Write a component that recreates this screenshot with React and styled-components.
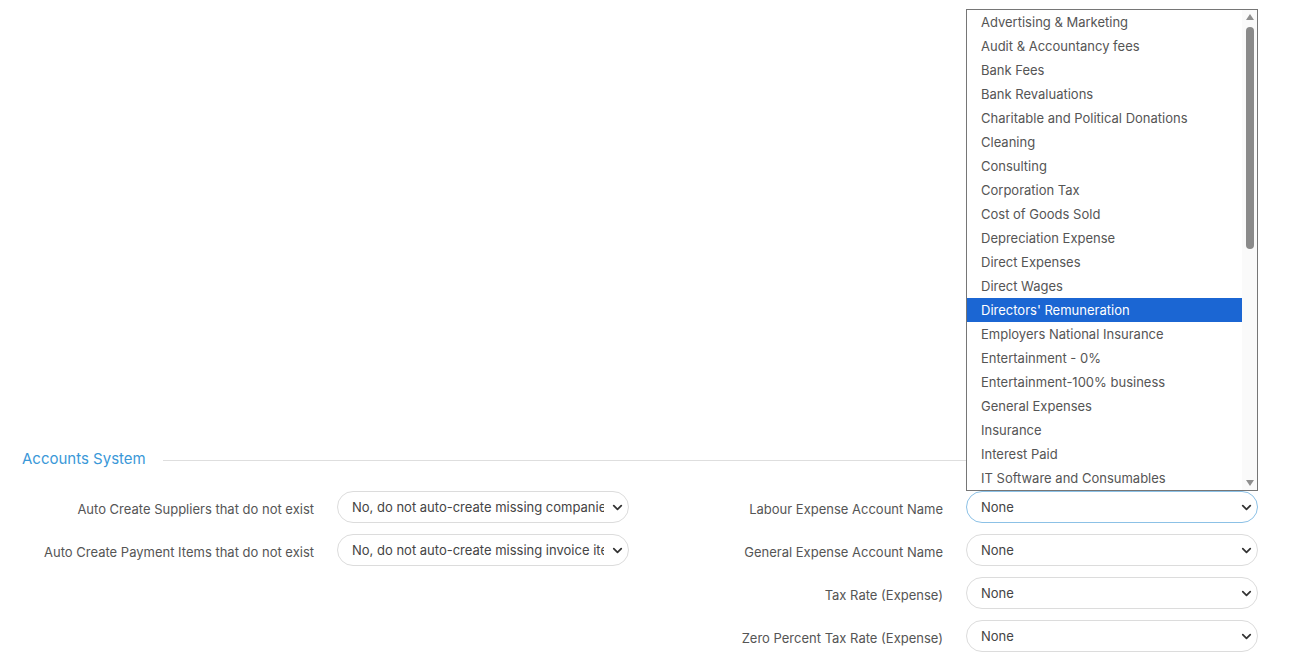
import React from "react";
import styled, { createGlobalStyle } from "styled-components";
import { ChevronDown } from "lucide-react";

const expenseAccounts = [
  "Advertising & Marketing",
  "Audit & Accountancy fees",
  "Bank Fees",
  "Bank Revaluations",
  "Charitable and Political Donations",
  "Cleaning",
  "Consulting",
  "Corporation Tax",
  "Cost of Goods Sold",
  "Depreciation Expense",
  "Direct Expenses",
  "Direct Wages",
  "Directors' Remuneration",
  "Employers National Insurance",
  "Entertainment - 0%",
  "Entertainment-100% business",
  "General Expenses",
  "Insurance",
  "Interest Paid",
  "IT Software and Consumables",
];

const Dropdown = ({ items, selected }) => (
  <StList>
    <StOptions>
      {items.map((item) => (
        <StOption key={item} active={item === selected}>
          {item}
        </StOption>
      ))}
    </StOptions>
    <StScrollbar>
      <StArrow up />
      <StTrack>
        <StThumb />
      </StTrack>
      <StArrow />
    </StScrollbar>
  </StList>
);

const Field = ({ label, value, focused, children }) => (
  <StField>
    <StLabel>{label}</StLabel>
    <StSelectWrap>
      <StSelect focused={focused}>
        <StValue>{value}</StValue>
        <ChevronDown size={15} strokeWidth={2.8} color="#333" />
      </StSelect>
      {children}
    </StSelectWrap>
  </StField>
);

const App = () => {
  return (
    <>
      <GlobalStyle />
      <StPage>
        <StSection>
          <StHeader>
            <StTitle>Accounts System</StTitle>
            <StRule />
          </StHeader>
          <StColumns>
            <StColumn>
              <Field
                label="Auto Create Suppliers that do not exist"
                value="No, do not auto-create missing companies"
              />
              <Field
                label="Auto Create Payment Items that do not exist"
                value="No, do not auto-create missing invoice items"
              />
            </StColumn>
            <StColumn>
              <Field label="Labour Expense Account Name" value="None" focused>
                <Dropdown
                  items={expenseAccounts}
                  selected="Directors' Remuneration"
                />
              </Field>
              <Field label="General Expense Account Name" value="None" />
              <Field label="Tax Rate (Expense)" value="None" />
              <Field label="Zero Percent Tax Rate (Expense)" value="None" />
            </StColumn>
          </StColumns>
        </StSection>
      </StPage>
    </>
  );
};

export default App;

const GlobalStyle = createGlobalStyle`
  body {
    margin: 0;
    background: #ffffff;
    font-family: Inter, "Liberation Sans", sans-serif;
  }
`;

const StPage = styled.div`
  width: 1290px;
  height: 670px;
  overflow: hidden;
  padding-top: 448px;
  box-sizing: border-box;
`;

const StSection = styled.div`
  display: flex;
  flex-direction: column;
`;

const StHeader = styled.div`
  display: flex;
  align-items: center;
  gap: 17px;
  padding: 0 40px 0 22px;
  height: 20px;
`;

const StTitle = styled.div`
  font-size: 15px;
  color: #3a98d8;
  white-space: nowrap;
`;

const StRule = styled.div`
  flex: 1;
  height: 1px;
  background: #dedede;
  margin-top: 4px;
`;

const StColumns = styled.div`
  display: grid;
  grid-template-columns: 650px 1fr;
  margin-top: 23px;
`;

const StColumn = styled.div`
  display: flex;
  flex-direction: column;
  gap: 11px;
`;

const StField = styled.div`
  display: flex;
  align-items: center;
  gap: 23px;
`;

const StLabel = styled.div`
  flex: none;
  text-align: right;
  font-size: 13px;
  color: #555;
  white-space: nowrap;
  padding-top: 3px;
  ${StColumn}:first-child & {
    width: 314px;
  }
  ${StColumn}:last-child & {
    width: 293px;
  }
`;

const StSelectWrap = styled.div`
  position: relative;
  width: 292px;
`;

const StSelect = styled.div`
  box-sizing: border-box;
  height: 32px;
  display: flex;
  align-items: center;
  gap: 6px;
  padding: 0 3px 0 14px;
  border: 1px solid ${(p) => (p.focused ? "#8cc1e6" : "#dcdcdc")};
  border-radius: 16px;
  background: #fff;
  font-size: 13px;
  color: #444;
`;

const StValue = styled.div`
  flex: 1;
  white-space: nowrap;
  overflow: hidden;
`;

const StList = styled.div`
  position: absolute;
  left: 0;
  bottom: 100%;
  width: 292px;
  box-sizing: border-box;
  border: 1px solid #767676;
  background: #fff;
  display: flex;
`;

const StOptions = styled.div`
  flex: 1;
  display: flex;
  flex-direction: column;
`;

const StOption = styled.div`
  height: 24px;
  line-height: 24px;
  padding-left: 14px;
  font-size: 13px;
  color: ${(p) => (p.active ? "#fff" : "#555")};
  background: ${(p) => (p.active ? "#1b66d3" : "transparent")};
  white-space: nowrap;
`;

const StScrollbar = styled.div`
  width: 15px;
  display: flex;
  flex-direction: column;
  align-items: center;
  background: #fafafa;
`;

const StArrow = styled.div`
  width: 0;
  height: 0;
  margin: ${(p) => (p.up ? "4px 0 3px" : "3px 0 4px")};
  border-left: 4.5px solid transparent;
  border-right: 4.5px solid transparent;
  ${(p) =>
    p.up
      ? "border-bottom: 6px solid #8f8f8f;"
      : "border-top: 6px solid #8f8f8f;"}
`;

const StTrack = styled.div`
  flex: 1;
  width: 100%;
  display: flex;
  justify-content: center;
`;

const StThumb = styled.div`
  width: 8px;
  height: 222px;
  margin-top: 4px;
  border-radius: 4px;
  background: #8a8a8a;
`;
